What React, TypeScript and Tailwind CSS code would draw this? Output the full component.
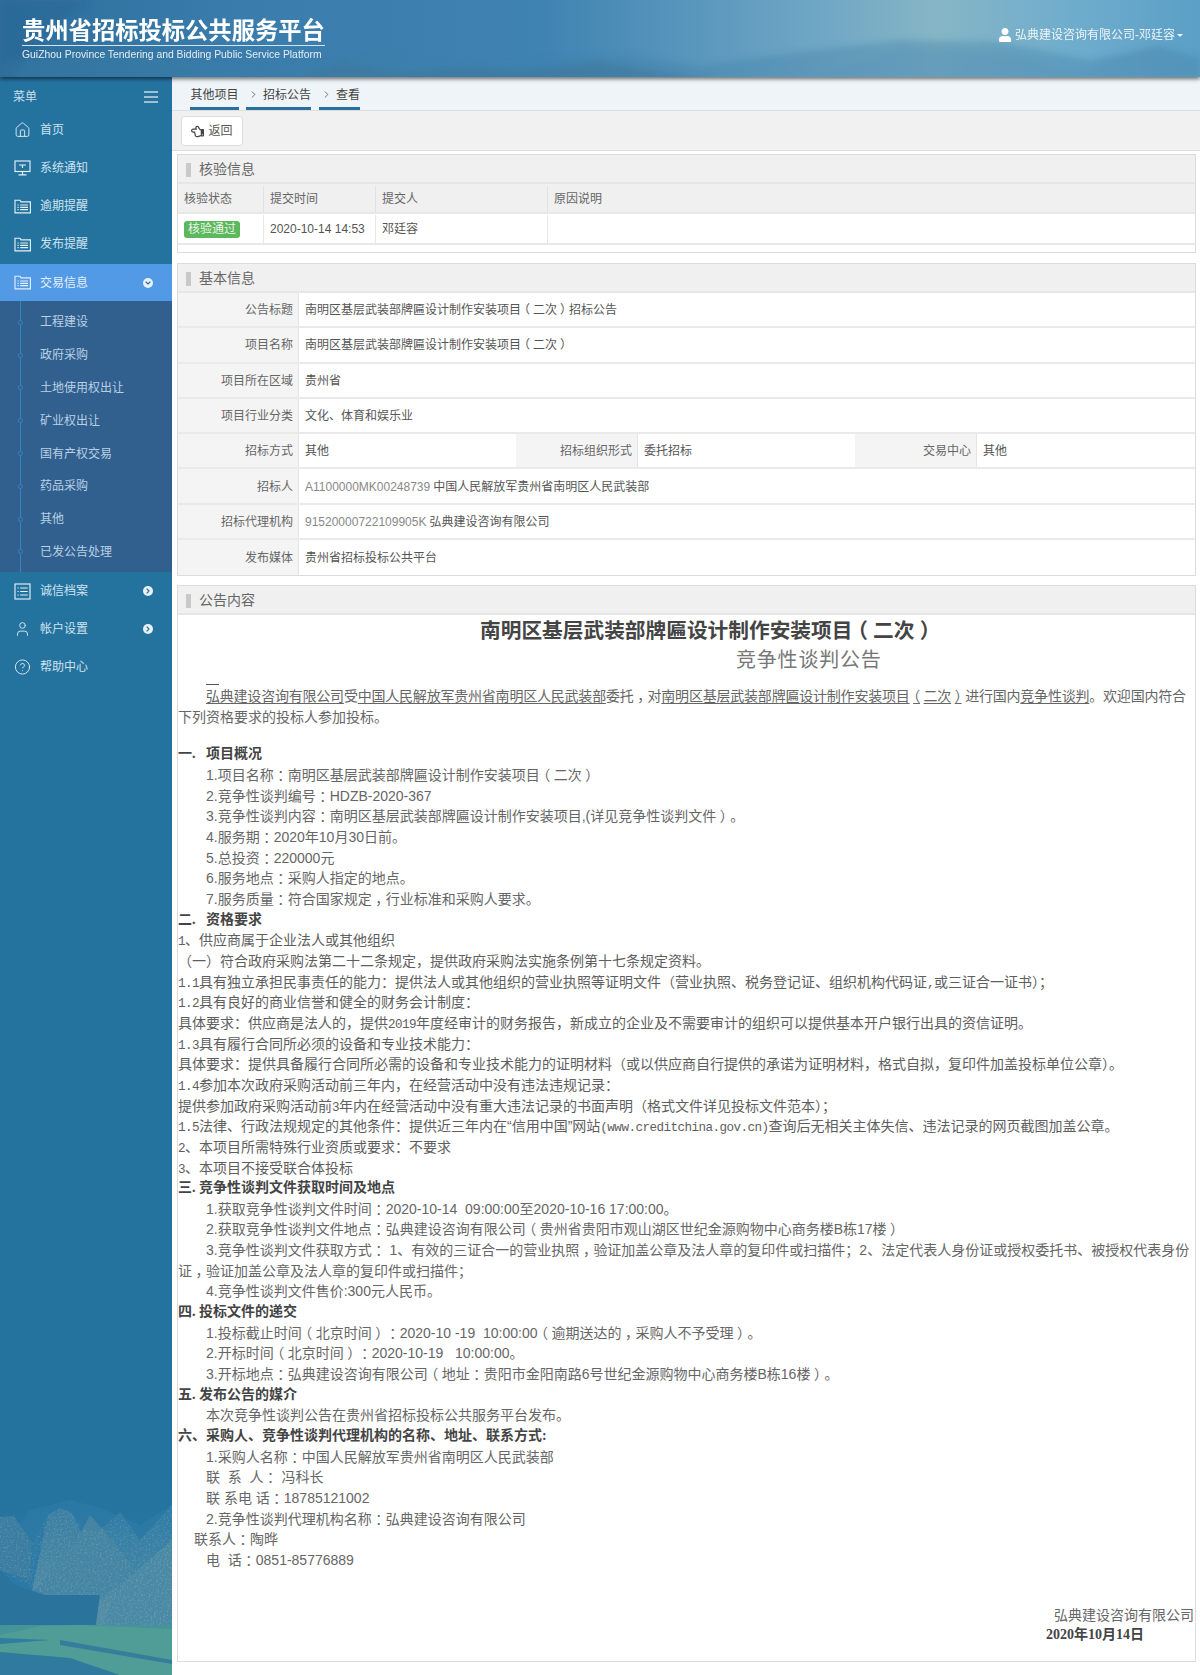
import React from "react";
import { Home, User, CircleHelp, ChevronDown, ChevronRight } from "lucide-react";
import { FaRegHandPointLeft, FaUser } from "react-icons/fa";

const cjk = "font-['Liberation_Sans','Noto_Sans_CJK_SC',sans-serif]";

function FolderList() {
  return (
    <svg width="17" height="15" viewBox="0 0 17 15" fill="none" stroke="currentColor" strokeWidth="1.15">
      <path d="M1 13.8V1.2h5l1 1.6h9.4v11z" />
      <path d="M3.5 6h1.2M6.2 6h7.8M3.5 8.3h1.2M6.2 8.3h7.8M3.5 10.6h1.2M6.2 10.6h7.8" />
    </svg>
  );
}
function ListBox() {
  return (
    <svg width="17" height="17" viewBox="0 0 17 17" fill="none" stroke="currentColor" strokeWidth="1.15">
      <rect x="1" y="1" width="15" height="15" />
      <path d="M3.5 5h1.2M6.2 5h7.5M3.5 8.5h1.2M6.2 8.5h7.5M3.5 12h1.2M6.2 12h7.5" />
    </svg>
  );
}
function Screen() {
  return (
    <svg width="17" height="16" viewBox="0 0 17 16" fill="none" stroke="currentColor" strokeWidth="1.15">
      <rect x="1" y="1" width="15" height="10.5" />
      <path d="M5 5h7M8.5 5v3M8.5 11.5v3M4.5 14.8h8" />
    </svg>
  );
}

function SideItem({ icon, label, dot, active }: { icon: React.ReactNode; label: string; dot?: "down" | "right"; active?: boolean }) {
  return (
    <div className={`flex items-center pl-[14px] text-[12px] ${active ? "h-[37px] bg-[#5299e6] text-[#e3effa]" : "h-[38px] text-[#cfe2ee]"}`}>
      <span className="flex w-[17px] justify-center text-[#e6f0f6]">{icon}</span>
      <span className="ml-[9px] flex-1">{label}</span>
      {dot && (
        <span className="mr-[19px] flex h-[10px] w-[10px] items-center justify-center rounded-full bg-[#e8f1f7] text-[#2a72a0]">
          {dot === "down" ? <ChevronDown size={8} strokeWidth={3.5} /> : <ChevronRight size={8} strokeWidth={3.5} />}
        </span>
      )}
    </div>
  );
}

function Sidebar() {
  const subs = ["工程建设", "政府采购", "土地使用权出让", "矿业权出让", "国有产权交易", "药品采购", "其他", "已发公告处理"];
  return (
    <aside className={`relative w-[172px] shrink-0 bg-[#24739f] ${cjk}`}>
      <svg className="absolute bottom-0 left-0" width="172" height="195" viewBox="0 0 172 195" preserveAspectRatio="none">
        <defs>
          <linearGradient id="m1" x1="0" y1="0" x2="0" y2="1">
            <stop offset="0" stopColor="#2f7ba5" />
            <stop offset="1" stopColor="#4c8ba6" />
          </linearGradient>
          <linearGradient id="m2" x1="0" y1="0" x2="0" y2="1">
            <stop offset="0" stopColor="#3a7fa3" />
            <stop offset="1" stopColor="#568ea4" />
          </linearGradient>
          <linearGradient id="sky" x1="0" y1="0" x2="0" y2="1">
            <stop offset="0" stopColor="#24739f" />
            <stop offset="1" stopColor="#2e7aa6" />
          </linearGradient>
          <filter id="grain" x="0" y="0" width="100%" height="100%">
            <feTurbulence type="fractalNoise" baseFrequency="0.55" numOctaves="2" seed="4" />
            <feColorMatrix values="0 0 0 0 0.75 0 0 0 0 0.85 0 0 0 0 0.88 0 0 0 1.6 -0.75" />
          </filter>
          <clipPath id="rock">
            <path d="M0 37L14 36 32 62 48 35 60 28 72 33 88 52 100 50 120 32 140 60 172 25V145H100L95 115H45L0 90z" />
          </clipPath>
        </defs>
        <rect width="172" height="195" fill="url(#sky)" />
        <path d="M0 70L30 30 70 20 100 28 140 45 172 25V150H0z" fill="#2e7ca6" opacity="0.6" />
        <path d="M88 150L100 50 120 32 140 60 172 25V150z" fill="url(#m1)" />
        <path d="M30 120L48 35 60 28 72 33 90 70 120 100 105 150H30z" fill="url(#m2)" />
        <path d="M0 37L14 36 32 62 30 100 0 90z" fill="#3a7da0" />
        <path d="M30 115L72 70 90 35 105 52 135 90 100 120 60 130z" fill="#4585a3" />
        <path d="M100 150L120 105 172 60V150z" fill="#4a89a5" />
        <rect width="172" height="150" filter="url(#grain)" clipPath="url(#rock)" opacity="0.3" />
        <path d="M0 90L15 105 45 115 100 115 95 150H70L0 155z" fill="#2a739c" />
        <rect y="145" width="172" height="50" fill="#44949a" />
        <path d="M0 155L40 146 80 145 172 149V195H0z" fill="#509c97" />
        <path d="M0 172L70 178 120 195H0z" fill="#2f7a9e" />
        <path d="M60 160L172 180V184L60 165z" fill="#347e9c" />
        <path d="M0 158L50 160 0 164z" fill="#2f7e9e" />
      </svg>
      <div className="relative">
        <div className="flex h-[34px] items-center justify-between pl-[13px] pr-[14px] pt-[6px] text-[12px] text-[#c9dfec]">
          <span>菜单</span>
          <span className="flex flex-col gap-[2.5px]">
            <span className="h-[2.5px] w-[14px] bg-[#9ec0d4]" />
            <span className="h-[2.5px] w-[14px] bg-[#9ec0d4]" />
            <span className="h-[2.5px] w-[14px] bg-[#9ec0d4]" />
          </span>
        </div>
        <SideItem icon={<Home size={18} strokeWidth={1.25} />} label="首页" />
        <SideItem icon={<Screen />} label="系统通知" />
        <SideItem icon={<FolderList />} label="逾期提醒" />
        <SideItem icon={<FolderList />} label="发布提醒" />
        <div className="h-[1px]" />
        <SideItem active icon={<FolderList />} label="交易信息" dot="down" />
        <div className="relative h-[271px] bg-[#31608f] pt-[5px]">
          <span className="absolute bottom-0 left-[20px] top-0 w-[1px] bg-[#3783c0]" />
          {subs.map((s) => (
            <div key={s} className="relative flex h-[32.8px] items-center pl-[40px] text-[12px] text-[#b9d0e3]">
              <span className="absolute left-[18px] h-[5px] w-[5px] rounded-full border border-[#3783c0] bg-[#31608f]" />
              {s}
            </div>
          ))}
        </div>
        <SideItem icon={<ListBox />} label="诚信档案" dot="right" />
        <SideItem icon={<User size={18} strokeWidth={1.25} />} label="帐户设置" dot="right" />
        <SideItem icon={<CircleHelp size={18} strokeWidth={1.25} />} label="帮助中心" />
      </div>
    </aside>
  );
}

function Header() {
  return (
    <header className={`relative z-10 h-[77px] shrink-0 overflow-hidden bg-[linear-gradient(90deg,#2d6e9c_0%,#3a7cab_20%,#3f83b2_45%,#6fa6c5_68%,#86b6c6_78%,#6eaccd_90%,#5b9fc6_100%)] shadow-[0_2px_4px_rgba(0,0,0,0.55)] ${cjk}`}>
      <svg className="absolute inset-0" width="1200" height="77" viewBox="0 0 1200 77" preserveAspectRatio="none">
        <defs>
          <filter id="soft"><feGaussianBlur stdDeviation="3" /></filter>
        </defs>
        <g filter="url(#soft)">
          <path d="M0 80L0 62 120 52 260 70 340 62 380 58 470 68 560 60 620 54 700 66 800 52 900 40 1000 42 1090 60 1160 46 1200 58V80z" fill="#3e7fa6" opacity="0.35" />
          <path d="M300 80L340 62 400 74 470 68 520 72 600 62 660 72 720 80z" fill="#3b7597" opacity="0.5" />
          <path d="M800 80L900 48 1010 54 1080 72 1150 48 1200 62V80z" fill="#5995ba" opacity="0.35" />
          <path d="M0 0H90L40 40 10 80H0z" fill="#23608c" opacity="0.25" />
        </g>
      </svg>
      <div className="relative flex items-start justify-between">
        <div className="ml-[22px] mt-[17px] w-[303px]">
          <div className="whitespace-nowrap text-[23.3px] font-bold leading-[28px] text-white">贵州省招标投标公共服务平台</div>
          <div className="h-[1px] bg-[#d4e4ee]" />
          <div className="mt-[2px] whitespace-nowrap text-[10.4px] leading-[13px] text-[#e3edf3]">GuiZhou Province Tendering and Bidding Public Service Platform</div>
        </div>
        <div className="mr-[17px] mt-[27px] flex items-center text-[12px] leading-[16px] text-[#eef4f8]">
          <FaUser size={14} className="mr-[3px] text-white" />
          <span>弘典建设咨询有限公司-邓廷容</span>
          <span className="ml-[2px] mt-[1px] h-0 w-0 border-x-[3px] border-t-[3px] border-x-transparent border-t-[#eef4f8]" />
        </div>
      </div>
    </header>
  );
}

function PanelTitle({ title }: { title: string }) {
  return (
    <div className="flex h-[29px] items-center border-b-2 border-[#e6e6e6] bg-[#f0f0f0] pl-[8px] pt-[2px] text-[14px] text-[#666]">
      <span className="h-[14px] w-[5px] bg-[#c9c9c9]" />
      <span className="ml-[8px]">{title}</span>
    </div>
  );
}

function Label({ children, w }: { children: React.ReactNode; w: string }) {
  return <div className={`flex items-center justify-end border-r border-[#e4e4e4] bg-[#f4f4f4] pr-[5px] pt-[1px] text-[#666] ${w}`}>{children}</div>;
}

function Row({ label, children, last }: { label: string; children: React.ReactNode; last?: boolean }) {
  return (
    <div className={`flex text-[12px] ${last ? "h-[35px]" : "h-[35.3px] border-b-2 border-[#eaeaea]"}`}>
      <Label w="w-[121px] shrink-0">{label}</Label>
      <div className="flex-1 self-center pl-[6px] pt-[1px] text-[#555]">{children}</div>
    </div>
  );
}

function Y({ t, u }: { t: string; u?: boolean }) {
  const parts = t.split(/([（）：，])/);
  const ul = u ? "underline underline-offset-2" : "";
  return (
    <>
      {parts.map((p, i) =>
        /^[（）：，]$/.test(p) ? (
          <span key={i} className={`inline-block w-[1em] text-center [font-feature-settings:'halt'] ${ul}`}>{p}</span>
        ) : (
          <span key={i} className={ul}>{p}</span>
        )
      )}
    </>
  );
}

function Mixed({ text }: { text: string }) {
  const parts = text.split(/([\x21-\x7e]+)/);
  return (
    <>
      {parts.map((p, i) =>
        /^[\x21-\x7e]+$/.test(p) ? (
          <span key={i} className="font-['Liberation_Mono'] text-[12.6px] tracking-[-0.55px]">{p}</span>
        ) : (
          p
        )
      )}
    </>
  );
}

const L = "h-[20.67px] whitespace-pre leading-[20.67px]";

function N({ t, i = 28 }: { t: string; i?: number }) {
  return <div className={L} style={{ paddingLeft: i }}><Y t={t} /></div>;
}
function S({ t }: { t: string }) {
  return <div className={`${L} text-[#5e5e5e]`}><Mixed text={t} /></div>;
}
function H({ t }: { t: string }) {
  return <div className={`${L} font-['Liberation_Serif','Noto_Sans_CJK_SC',serif] font-bold text-[#444]`}>{t}</div>;
}

function Article() {
  return (
    <div className={`pb-[15px] text-[14px] text-[#666] ${cjk}`}>
      <div className="mt-[1px] h-[30px] whitespace-nowrap pl-[302px] text-[20.7px] font-bold leading-[30px] text-[#444]"><Y t="南明区基层武装部牌匾设计制作安装项目（二次）" /></div>
      <div className="h-[28px] whitespace-nowrap pl-[558px] text-[20px] leading-[28px] tracking-[0.8px] text-[#777]">竞争性谈判公告</div>
      <div className="ml-[28px] mt-[10px] h-[1px] w-[13px] bg-[#555]" />
      <div className="mt-[1px] h-[20.67px] whitespace-nowrap pl-[28px] leading-[20.67px] tracking-[-0.21px]">
        <Y u t="弘典建设咨询有限公司" />受<Y u t="中国人民解放军贵州省南明区人民武装部" />委托<Y t="，" />对<Y u t="南明区基层武装部牌匾设计制作安装项目（二次）" />进行国内<Y u t="竞争性谈判" />。欢迎国内符合
      </div>
      <div className={L}>下列资格要求的投标人参加投标。</div>
      <div className="h-[17px]" />
      <H t="一.   项目概况" />
      <N t="1.项目名称：南明区基层武装部牌匾设计制作安装项目（二次）" />
      <N t="2.竞争性谈判编号：HDZB-2020-367" />
      <N t="3.竞争性谈判内容：南明区基层武装部牌匾设计制作安装项目,(详见竞争性谈判文件）。" />
      <N t="4.服务期：2020年10月30日前。" />
      <N t="5.总投资：220000元" />
      <N t="6.服务地点：采购人指定的地点。" />
      <N t="7.服务质量：符合国家规定，行业标准和采购人要求。" />
      <H t="二.   资格要求" />
      <S t="1、供应商属于企业法人或其他组织" />
      <S t="（一）符合政府采购法第二十二条规定，提供政府采购法实施条例第十七条规定资料。" />
      <S t="1.1具有独立承担民事责任的能力：提供法人或其他组织的营业执照等证明文件（营业执照、税务登记证、组织机构代码证,或三证合一证书）；" />
      <S t="1.2具有良好的商业信誉和健全的财务会计制度：" />
      <S t="具体要求：供应商是法人的，提供2019年度经审计的财务报告，新成立的企业及不需要审计的组织可以提供基本开户银行出具的资信证明。" />
      <S t="1.3具有履行合同所必须的设备和专业技术能力：" />
      <S t="具体要求：提供具备履行合同所必需的设备和专业技术能力的证明材料（或以供应商自行提供的承诺为证明材料，格式自拟，复印件加盖投标单位公章）。" />
      <S t="1.4参加本次政府采购活动前三年内，在经营活动中没有违法违规记录：" />
      <S t="提供参加政府采购活动前3年内在经营活动中没有重大违法记录的书面声明（格式文件详见投标文件范本）；" />
      <S t="1.5法律、行政法规规定的其他条件：提供近三年内在“信用中国”网站(www.creditchina.gov.cn)查询后无相关主体失信、违法记录的网页截图加盖公章。" />
      <S t="2、本项目所需特殊行业资质或要求：不要求" />
      <S t="3、本项目不接受联合体投标" />
      <H t="三. 竞争性谈判文件获取时间及地点" />
      <N t="1.获取竞争性谈判文件时间：2020-10-14  09:00:00至2020-10-16 17:00:00。" />
      <N t="2.获取竞争性谈判文件地点：弘典建设咨询有限公司（贵州省贵阳市观山湖区世纪金源购物中心商务楼B栋17楼）" />
      <N t="3.竞争性谈判文件获取方式： 1、有效的三证合一的营业执照，验证加盖公章及法人章的复印件或扫描件；2、法定代表人身份证或授权委托书、被授权代表身份" />
      <N i={0} t="证，验证加盖公章及法人章的复印件或扫描件；" />
      <N t="4.竞争性谈判文件售价:300元人民币。" />
      <H t="四. 投标文件的递交" />
      <N t="1.投标截止时间（北京时间）：2020-10 -19  10:00:00（逾期送达的，采购人不予受理）。" />
      <N t="2.开标时间（北京时间）：2020-10-19   10:00:00。" />
      <N t="3.开标地点：弘典建设咨询有限公司（地址：贵阳市金阳南路6号世纪金源购物中心商务楼B栋16楼）。" />
      <H t="五. 发布公告的媒介" />
      <N t="本次竞争性谈判公告在贵州省招标投标公共服务平台发布。" />
      <H t="六、采购人、竞争性谈判代理机构的名称、地址、联系方式:" />
      <N t="1.采购人名称：中国人民解放军贵州省南明区人民武装部" />
      <N t="联  系  人： 冯科长" />
      <N t="联 系电 话：18785121002" />
      <N t="2.竞争性谈判代理机构名称：弘典建设咨询有限公司" />
      <N i={16} t="联系人：陶晔" />
      <N t="电  话：0851-85776889" />
      <div className="h-[34px]" />
      <div className="h-[20.67px] pr-[1px] text-right leading-[20.67px]">弘典建设咨询有限公司</div>
      <div className="h-[20.67px] pr-[51px] text-right font-['Liberation_Serif','Noto_Sans_CJK_SC',serif] font-bold leading-[20.67px] text-[#444]">2020年10月14日</div>
    </div>
  );
}

function Crumb({ t, w, ml }: { t: string; w: string; ml: string }) {
  return (
    <div className={`flex h-full items-center justify-center border-b-[3px] border-[#2a6f9e] text-[12px] text-[#444] ${w} ${ml}`}>{t}</div>
  );
}

function Main() {
  return (
    <main className={`min-w-0 flex-1 bg-white ${cjk}`}>
      <div className="relative flex h-[34px] items-stretch border-b border-[#dedede] bg-[#eff4f8] pl-[17px] pt-[5px]">
        <Crumb t="其他项目" w="w-[49px]" ml="ml-[1px]" />
        <span className="absolute left-[76px] top-[8px] text-[#555]"><ChevronRight size={11} strokeWidth={1.7} className="mt-[4px]" /></span>
        <Crumb t="招标公告" w="w-[65px] pl-[17px]" ml="ml-[7px]" />
        <span className="absolute left-[149px] top-[8px] text-[#555]"><ChevronRight size={11} strokeWidth={1.7} className="mt-[4px]" /></span>
        <Crumb t="查看" w="w-[41px] pl-[17px]" ml="ml-[8px]" />
      </div>
      <div className="flex h-[40px] items-start border-b border-[#dcdcdc] bg-[#f1f1f1] pl-[9px] pt-[5px]">
        <div className="flex h-[30px] w-[62px] items-center justify-center rounded-[3px] border border-[#dddddd] bg-white text-[12px] text-[#555]">
          <FaRegHandPointLeft size={13} className="mr-[4px] text-[#444]" />
          返回
        </div>
      </div>
      <div className="ml-[5px] mr-[4px] mt-[3px] border border-[#dcdcdc]">
        <PanelTitle title="核验信息" />
        <div className="flex h-[30px] border-b-2 border-[#e8e8e8] bg-[#f0f0f0] pt-[2px] text-[12px] text-[#666]">
          <div className="flex w-[86px] items-center border-r border-[#e2e2e2] pl-[6px]">核验状态</div>
          <div className="flex w-[112px] items-center border-r border-[#e2e2e2] pl-[6px]">提交时间</div>
          <div className="flex w-[172px] items-center border-r border-[#e2e2e2] pl-[6px]">提交人</div>
          <div className="flex flex-1 items-center pl-[6px]">原因说明</div>
        </div>
        <div className="flex h-[31px] border-b-2 border-[#e8e8e8] pt-[1px] text-[12px] text-[#555]">
          <div className="flex w-[86px] items-center border-r border-[#e8e8e8] pl-[6px]">
            <span className="flex h-[17px] w-[56px] items-center justify-center rounded-[3px] bg-[#5cb85c] text-[12px] text-[#e8f5e8]">核验通过</span>
          </div>
          <div className="flex w-[112px] items-center border-r border-[#e8e8e8] pl-[6px]">2020-10-14 14:53</div>
          <div className="flex w-[172px] items-center border-r border-[#e8e8e8] pl-[6px]">邓廷容</div>
          <div className="flex-1" />
        </div>
        <div className="h-[7px]" />
      </div>
      <div className="ml-[5px] mr-[4px] mt-[10px] border border-[#dcdcdc]">
        <PanelTitle title="基本信息" />
        <Row label="公告标题"><Y t="南明区基层武装部牌匾设计制作安装项目（二次）招标公告" /></Row>
        <Row label="项目名称"><Y t="南明区基层武装部牌匾设计制作安装项目（二次）" /></Row>
        <Row label="项目所在区域">贵州省</Row>
        <Row label="项目行业分类">文化、体育和娱乐业</Row>
        <div className="flex h-[35.3px] border-b-2 border-[#eaeaea] text-[12px] text-[#555]">
          <Label w="w-[121px] shrink-0">招标方式</Label>
          <div className="flex w-[217px] items-center pl-[6px] pt-[1px]">其他</div>
          <Label w="w-[122px] shrink-0">招标组织形式</Label>
          <div className="flex w-[217px] items-center pl-[6px] pt-[1px]">委托招标</div>
          <Label w="w-[122px] shrink-0">交易中心</Label>
          <div className="flex flex-1 items-center pl-[6px] pt-[1px]">其他</div>
        </div>
        <Row label="招标人"><span className="mr-[3px] text-[#888]">A1100000MK00248739</span>中国人民解放军贵州省南明区人民武装部</Row>
        <Row label="招标代理机构"><span className="mr-[3px] text-[#888]">91520000722109905K</span>弘典建设咨询有限公司</Row>
        <Row last label="发布媒体">贵州省招标投标公共平台</Row>
      </div>
      <div className="ml-[5px] mr-[4px] mt-[9px] border border-[#dcdcdc]">
        <PanelTitle title="公告内容" />
        <Article />
      </div>
    </main>
  );
}

export default function App() {
  return (
    <div className="flex h-[1675px] w-[1200px] flex-col overflow-hidden bg-white">
      <Header />
      <div className="flex min-h-0 flex-1">
        <Sidebar />
        <Main />
      </div>
    </div>
  );
}
